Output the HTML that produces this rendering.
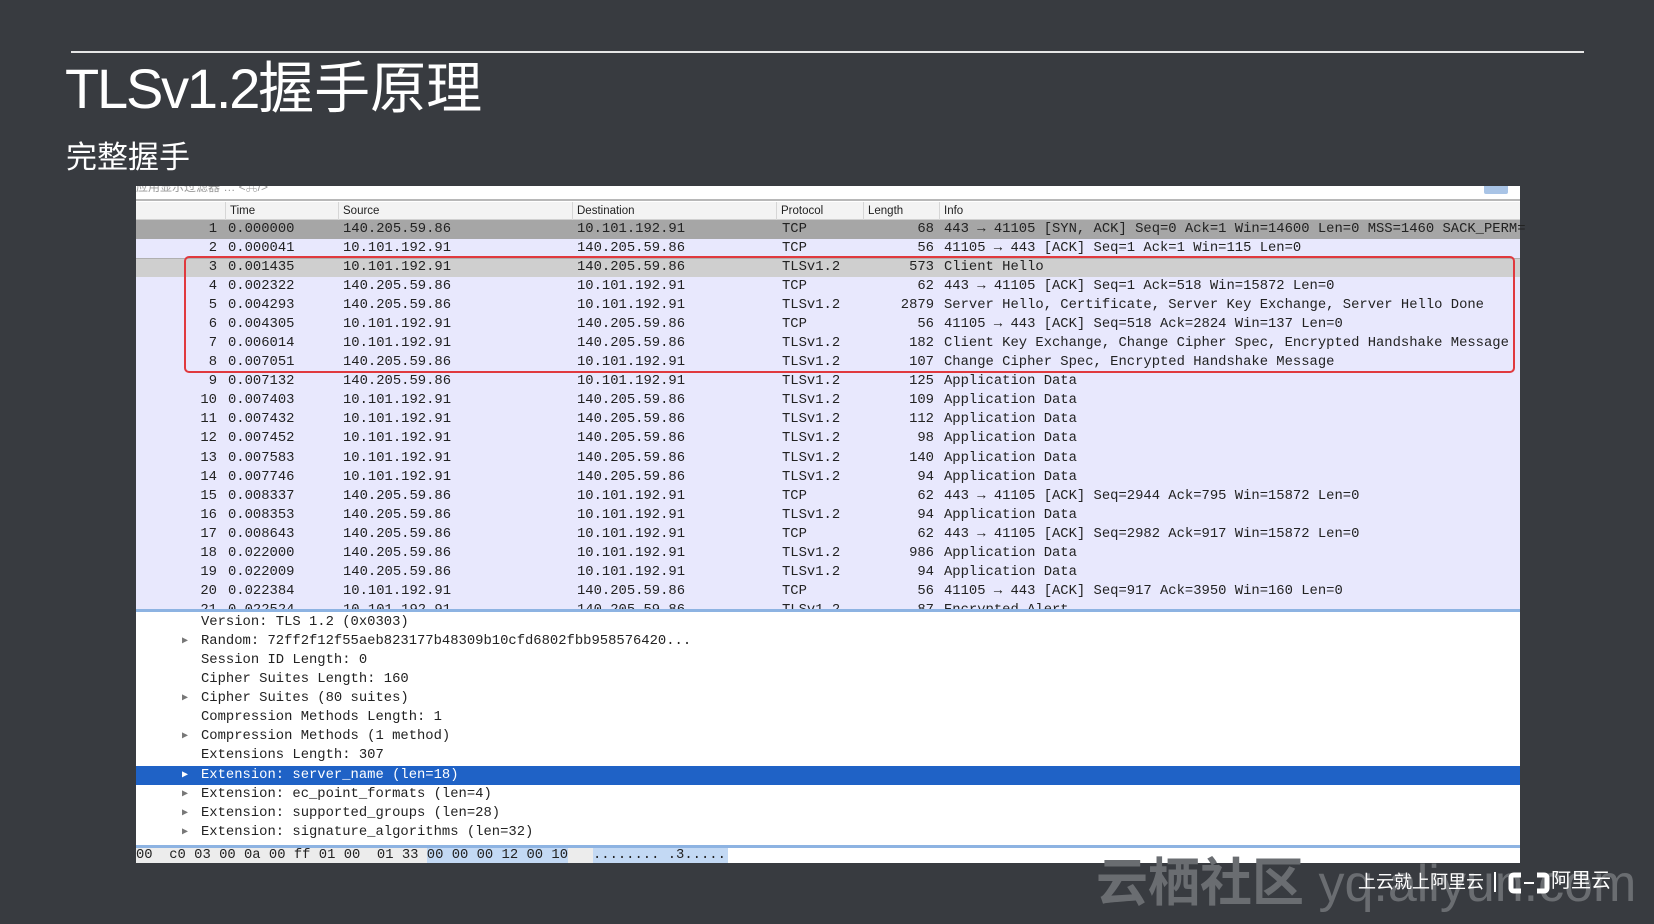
<!DOCTYPE html>
<html><head><meta charset="utf-8"><style>
*{margin:0;padding:0;box-sizing:border-box}
body{width:1654px;height:924px;background:#383b40;position:relative;overflow:hidden;font-family:"Liberation Sans","Noto Sans CJK SC",sans-serif}
.a{position:absolute;white-space:pre}
.m{font-family:"Liberation Mono","DejaVu Sans Mono",monospace;font-size:13.85px;color:#222}
.row{position:absolute;left:136px;width:1384px;height:20px;line-height:19px;background:#e8e8fd}
.row span{position:absolute;top:0;white-space:pre}
.c0{right:1303px;text-align:right}
.c1{left:92px}.c2{left:207px}.c3{left:441px}.c4{left:646px}.c5{right:586px}.c6{left:808px}
.hd{position:absolute;top:202px;left:136px;width:1384px;height:18px;background:#f3f3f3;border-bottom:1px solid #d0d0d0;font-size:11.5px;color:#222;line-height:18px}
.hd span{position:absolute;top:0;border-left:1px solid #d6d6d6;padding-left:4px;height:18px}
.dl{position:absolute;left:136px;width:1384px;height:19px;line-height:19px}
.dl .t{position:absolute;left:65px}
.dl .tri{position:absolute;left:46px;font-size:10px;color:#777}
</style></head><body>
<div class="a" style="left:71px;top:51px;width:1513px;height:2px;background:#e6e6e6"></div>
<div class="a" style="left:65px;top:58px;font-size:56px;line-height:62px;color:#fff"><span style="letter-spacing:-2.2px">TLSv1.2</span>握手原理</div>
<div class="a" style="left:66px;top:141px;font-size:31px;line-height:34px;color:#fff">完整握手</div>

<div class="a" style="left:136px;top:186px;width:1384px;height:677px;background:#fff;overflow:hidden">
 <div class="a" style="left:0;top:-8px;font-size:12px;color:#999">应用显示过滤器 … &lt;⌘/&gt;</div>
 <div class="a" style="left:1348px;top:0;width:24px;height:8px;background:#a9c4e6;border-radius:0 0 2px 2px"></div>
 <div class="a" style="left:0;top:13px;width:1384px;height:2px;background:#b8b8b8"></div>
</div>
<div class="a" style="left:136px;top:219px;width:1384px;height:391px;background:#e8e8fd"></div>

<div class="hd">
<span style="left:89px">Time</span><span style="left:202px">Source</span><span style="left:436px">Destination</span><span style="left:640px">Protocol</span><span style="left:727px">Length</span><span style="left:803px">Info</span>
</div>

<div class="m">
<div class="row" style="top:220px;background:#a6a6a6"><span class="c0">1</span><span class="c1">0.000000</span><span class="c2">140.205.59.86</span><span class="c3">10.101.192.91</span><span class="c4">TCP</span><span class="c5">68</span><span class="c6">443 → 41105 [SYN, ACK] Seq=0 Ack=1 Win=14600 Len=0 MSS=1460 SACK_PERM=</span></div>
<div class="row" style="top:239px"><span class="c0">2</span><span class="c1">0.000041</span><span class="c2">10.101.192.91</span><span class="c3">140.205.59.86</span><span class="c4">TCP</span><span class="c5">56</span><span class="c6">41105 → 443 [ACK] Seq=1 Ack=1 Win=115 Len=0</span></div>
<div class="row" style="top:258px;background:#cfcfcf;border-top:1px solid #b0b0b0;border-bottom:1px solid #b0b0b0;line-height:17px"><span class="c0">3</span><span class="c1">0.001435</span><span class="c2">10.101.192.91</span><span class="c3">140.205.59.86</span><span class="c4">TLSv1.2</span><span class="c5">573</span><span class="c6">Client Hello</span></div>
<div class="row" style="top:277px"><span class="c0">4</span><span class="c1">0.002322</span><span class="c2">140.205.59.86</span><span class="c3">10.101.192.91</span><span class="c4">TCP</span><span class="c5">62</span><span class="c6">443 → 41105 [ACK] Seq=1 Ack=518 Win=15872 Len=0</span></div>
<div class="row" style="top:296px"><span class="c0">5</span><span class="c1">0.004293</span><span class="c2">140.205.59.86</span><span class="c3">10.101.192.91</span><span class="c4">TLSv1.2</span><span class="c5">2879</span><span class="c6">Server Hello, Certificate, Server Key Exchange, Server Hello Done</span></div>
<div class="row" style="top:315px"><span class="c0">6</span><span class="c1">0.004305</span><span class="c2">10.101.192.91</span><span class="c3">140.205.59.86</span><span class="c4">TCP</span><span class="c5">56</span><span class="c6">41105 → 443 [ACK] Seq=518 Ack=2824 Win=137 Len=0</span></div>
<div class="row" style="top:334px"><span class="c0">7</span><span class="c1">0.006014</span><span class="c2">10.101.192.91</span><span class="c3">140.205.59.86</span><span class="c4">TLSv1.2</span><span class="c5">182</span><span class="c6">Client Key Exchange, Change Cipher Spec, Encrypted Handshake Message</span></div>
<div class="row" style="top:353px"><span class="c0">8</span><span class="c1">0.007051</span><span class="c2">140.205.59.86</span><span class="c3">10.101.192.91</span><span class="c4">TLSv1.2</span><span class="c5">107</span><span class="c6">Change Cipher Spec, Encrypted Handshake Message</span></div>
<div class="row" style="top:372px"><span class="c0">9</span><span class="c1">0.007132</span><span class="c2">140.205.59.86</span><span class="c3">10.101.192.91</span><span class="c4">TLSv1.2</span><span class="c5">125</span><span class="c6">Application Data</span></div>
<div class="row" style="top:391px"><span class="c0">10</span><span class="c1">0.007403</span><span class="c2">10.101.192.91</span><span class="c3">140.205.59.86</span><span class="c4">TLSv1.2</span><span class="c5">109</span><span class="c6">Application Data</span></div>
<div class="row" style="top:410px"><span class="c0">11</span><span class="c1">0.007432</span><span class="c2">10.101.192.91</span><span class="c3">140.205.59.86</span><span class="c4">TLSv1.2</span><span class="c5">112</span><span class="c6">Application Data</span></div>
<div class="row" style="top:429px"><span class="c0">12</span><span class="c1">0.007452</span><span class="c2">10.101.192.91</span><span class="c3">140.205.59.86</span><span class="c4">TLSv1.2</span><span class="c5">98</span><span class="c6">Application Data</span></div>
<div class="row" style="top:449px"><span class="c0">13</span><span class="c1">0.007583</span><span class="c2">10.101.192.91</span><span class="c3">140.205.59.86</span><span class="c4">TLSv1.2</span><span class="c5">140</span><span class="c6">Application Data</span></div>
<div class="row" style="top:468px"><span class="c0">14</span><span class="c1">0.007746</span><span class="c2">10.101.192.91</span><span class="c3">140.205.59.86</span><span class="c4">TLSv1.2</span><span class="c5">94</span><span class="c6">Application Data</span></div>
<div class="row" style="top:487px"><span class="c0">15</span><span class="c1">0.008337</span><span class="c2">140.205.59.86</span><span class="c3">10.101.192.91</span><span class="c4">TCP</span><span class="c5">62</span><span class="c6">443 → 41105 [ACK] Seq=2944 Ack=795 Win=15872 Len=0</span></div>
<div class="row" style="top:506px"><span class="c0">16</span><span class="c1">0.008353</span><span class="c2">140.205.59.86</span><span class="c3">10.101.192.91</span><span class="c4">TLSv1.2</span><span class="c5">94</span><span class="c6">Application Data</span></div>
<div class="row" style="top:525px"><span class="c0">17</span><span class="c1">0.008643</span><span class="c2">140.205.59.86</span><span class="c3">10.101.192.91</span><span class="c4">TCP</span><span class="c5">62</span><span class="c6">443 → 41105 [ACK] Seq=2982 Ack=917 Win=15872 Len=0</span></div>
<div class="row" style="top:544px"><span class="c0">18</span><span class="c1">0.022000</span><span class="c2">140.205.59.86</span><span class="c3">10.101.192.91</span><span class="c4">TLSv1.2</span><span class="c5">986</span><span class="c6">Application Data</span></div>
<div class="row" style="top:563px"><span class="c0">19</span><span class="c1">0.022009</span><span class="c2">140.205.59.86</span><span class="c3">10.101.192.91</span><span class="c4">TLSv1.2</span><span class="c5">94</span><span class="c6">Application Data</span></div>
<div class="row" style="top:582px"><span class="c0">20</span><span class="c1">0.022384</span><span class="c2">10.101.192.91</span><span class="c3">140.205.59.86</span><span class="c4">TCP</span><span class="c5">56</span><span class="c6">41105 → 443 [ACK] Seq=917 Ack=3950 Win=160 Len=0</span></div>
<div class="row" style="top:601px;height:9px;overflow:hidden"><span class="c0">21</span><span class="c1">0.022524</span><span class="c2">10.101.192.91</span><span class="c3">140.205.59.86</span><span class="c4">TLSv1.2</span><span class="c5">87</span><span class="c6">Encrypted Alert</span></div>
</div>
<div class="a" style="left:136px;top:609px;width:1384px;height:3px;background:#8db3e2"></div>

<div class="a" style="left:184px;top:256px;width:1331px;height:117px;border:2px solid #e0393e;border-radius:5px"></div>

<div class="m">
<div class="dl" style="top:613px"><span class="t">Version: TLS 1.2 (0x0303)</span></div>
<div class="dl" style="top:632px"><span class="tri">▶</span><span class="t">Random: 72ff2f12f55aeb823177b48309b10cfd6802fbb958576420...</span></div>
<div class="dl" style="top:651px"><span class="t">Session ID Length: 0</span></div>
<div class="dl" style="top:670px"><span class="t">Cipher Suites Length: 160</span></div>
<div class="dl" style="top:689px"><span class="tri">▶</span><span class="t">Cipher Suites (80 suites)</span></div>
<div class="dl" style="top:708px"><span class="t">Compression Methods Length: 1</span></div>
<div class="dl" style="top:727px"><span class="tri">▶</span><span class="t">Compression Methods (1 method)</span></div>
<div class="dl" style="top:746px"><span class="t">Extensions Length: 307</span></div>
<div class="dl" style="top:766px;background:#1f62c6;color:#fff"><span class="tri" style="color:#fff">▶</span><span class="t">Extension: server_name (len=18)</span></div>
<div class="dl" style="top:785px"><span class="tri">▶</span><span class="t">Extension: ec_point_formats (len=4)</span></div>
<div class="dl" style="top:804px"><span class="tri">▶</span><span class="t">Extension: supported_groups (len=28)</span></div>
<div class="dl" style="top:823px"><span class="tri">▶</span><span class="t">Extension: signature_algorithms (len=32)</span></div>
</div>
<div class="a" style="left:136px;top:845px;width:1384px;height:3px;background:#8db3e2"></div>
<div class="a" style="left:136px;top:848px;width:1384px;height:15px;background:#fff"></div>
<div class="a m" style="left:136px;top:848px;width:592px;height:15px;line-height:15px;background:#ececec;overflow:hidden">00  c0 03 00 0a 00 ff 01 00  01 33 <span style="background:#c3d9f4">00 00 00 12 00 10</span>   <span style="background:#c3d9f4">........ .3......</span></div>

<div class="a" style="left:1096px;top:853px;font-size:52px;line-height:62px;color:#6a6d71;font-weight:bold">云栖社区 <span style="font-weight:normal">yq.aliyun.com</span></div>
<div class="a" style="left:1358px;top:870px;font-size:18px;line-height:24px;color:#fff">上云就上阿里云</div>
<div class="a" style="left:1494px;top:872px;width:2px;height:20px;background:#fff"></div>
<svg class="a" style="left:1508px;top:872px" width="42" height="22" viewBox="0 0 42 22"><path d="M13 3H6Q3 3 3 6V16Q3 19 6 19H13" fill="none" stroke="#fff" stroke-width="5"/><path d="M29 3H36Q39 3 39 6V16Q39 19 36 19H29" fill="none" stroke="#fff" stroke-width="5"/><rect x="16" y="10" width="10" height="2" fill="#fff"/></svg>
<div class="a" style="left:1551px;top:869px;font-size:20px;line-height:24px;color:#fff">阿里云</div>
</body></html>
